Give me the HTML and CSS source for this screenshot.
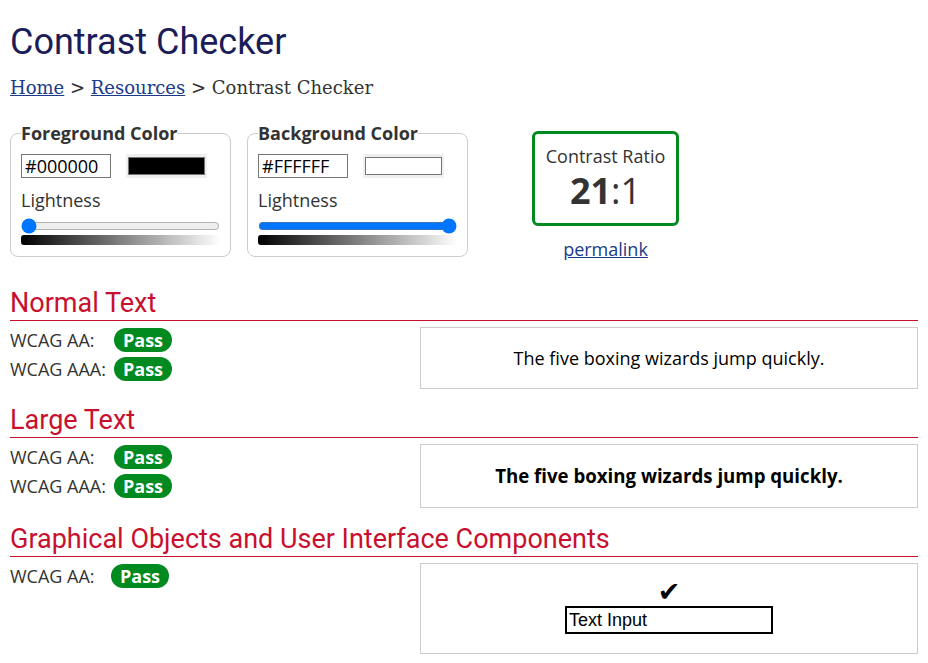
FILE: index.html
```html
<!DOCTYPE html>
<html lang="en">
<head>
<meta charset="utf-8">
<title>Contrast Checker</title>
<link rel="stylesheet" href="styles.css">
</head>
<body>
<h1 class="title">Contrast Checker</h1>
<nav class="crumbs"><a href="#">Home</a> &gt; <a href="#">Resources</a> &gt; Contrast Checker</nav>

<div class="controls">
  <fieldset class="picker">
    <legend>Foreground Color</legend>
    <div class="pick-row">
      <input class="hex" type="text" value="#000000">
      <span class="swatch-wrap"><span class="swatch swatch-black"></span></span>
    </div>
    <label class="light-label">Lightness</label>
    <input class="range" type="range" min="0" max="100" value="0">
    <div class="grad"></div>
  </fieldset>
  <fieldset class="picker">
    <legend>Background Color</legend>
    <div class="pick-row">
      <input class="hex" type="text" value="#FFFFFF">
      <span class="swatch-wrap"><span class="swatch swatch-white"></span></span>
    </div>
    <label class="light-label">Lightness</label>
    <input class="range" type="range" min="0" max="100" value="100">
    <div class="grad"></div>
  </fieldset>
  <div class="ratio-col">
    <div class="ratio-box">
      <div class="ratio-label">Contrast Ratio</div>
      <div class="ratio-value"><b>21</b>:1</div>
    </div>
    <a class="permalink" href="#">permalink</a>
  </div>
</div>

<section class="result">
  <h2 class="sec-title">Normal Text</h2>
  <div class="sec-body">
    <table class="levels">
      <tr><td class="lvl">WCAG AA:</td><td><span class="pass">Pass</span></td></tr>
      <tr><td class="lvl">WCAG AAA:</td><td><span class="pass">Pass</span></td></tr>
    </table>
    <div class="sample sample-normal">The five boxing wizards jump quickly.</div>
  </div>
</section>

<section class="result">
  <h2 class="sec-title">Large Text</h2>
  <div class="sec-body">
    <table class="levels">
      <tr><td class="lvl">WCAG AA:</td><td><span class="pass">Pass</span></td></tr>
      <tr><td class="lvl">WCAG AAA:</td><td><span class="pass">Pass</span></td></tr>
    </table>
    <div class="sample sample-large">The five boxing wizards jump quickly.</div>
  </div>
</section>

<section class="result">
  <h2 class="sec-title">Graphical Objects and User Interface Components</h2>
  <div class="sec-body">
    <table class="levels">
      <tr><td class="lvl lvl-short">WCAG AA:</td><td><span class="pass">Pass</span></td></tr>
    </table>
    <div class="sample sample-ui">
      <span class="check">&#10004;</span>
      <div class="fake-input">Text Input</div>
    </div>
  </div>
</section>
</body>
</html>
```

FILE: styles.css
```css
* { box-sizing: border-box; }
body {
  margin: 0;
  padding: 0 10px;
  font-family: "Open Sans", sans-serif;
  font-size: 18px;
  color: #333;
  background: #fff;
}
.title {
  font-family: Roboto, sans-serif;
  font-weight: 400;
  font-size: 36px;
  color: #1b1d5a;
  margin: 21px 0 14px;
  line-height: 42px;
}
.crumbs {
  font-family: "DejaVu Serif", serif;
  font-size: 18px;
  color: #333;
  line-height: 22px;
}
.crumbs a { color: #1a3a8a; }

.controls {
  display: flex;
  align-items: flex-start;
  margin-top: 23px;
}
.picker {
  margin: 0 16px 0 0;
  width: 221px;
  border: 1px solid #ccc;
  border-radius: 8px;
  padding: 0 10px 11px;
}
.picker legend {
  font-weight: 700;
  font-size: 18px;
  color: #333;
  padding: 0;
  line-height: 22px;
}
.pick-row {
  display: flex;
  align-items: center;
  gap: 15px;
  margin-top: 10px;
}
.hex {
  width: 90px;
  height: 24px;
  font-family: "Open Sans", sans-serif;
  font-size: 18px;
  color: #000;
  border: 1px solid #767676;
  padding: 0 3px;
  margin: 0;
}
.swatch-wrap {
  display: block;
  width: 81px;
  height: 24px;
  background: #efefef;
  padding: 3px 2px;
}
.swatch {
  display: block;
  height: 100%;
  border: 1px solid #767676;
}
.swatch-black { background: #000; }
.swatch-white { background: #fff; }
.light-label {
  display: block;
  margin-top: 10px;
  line-height: 24px;
}
.range {
  display: block;
  width: 199px;
  margin: 6px 0 0;
  height: 16px;
}
.grad {
  width: 199px;
  height: 10px;
  margin-top: 1px;
  border-radius: 3px 0 0 3px;
  background: linear-gradient(to right, #000, #fff);
}
.ratio-col {
  margin-left: 48px;
  margin-top: 9px;
  width: 147px;
  display: flex;
  flex-direction: column;
  align-items: center;
}
.ratio-box {
  width: 147px;
  height: 95px;
  border: 3px solid #008a20;
  border-radius: 6px;
  text-align: center;
  padding-top: 10px;
}
.ratio-label { line-height: 24px; }
.ratio-value {
  font-size: 36px;
  line-height: 46px;
  color: #333;
}
.ratio-value b { font-weight: 700; }
.permalink {
  margin-top: 11px;
  color: #1a3a8a;
  line-height: 24px;
}

.controls + .result { margin-top: 27px; }
.sec-title {
  font-family: Roboto, sans-serif;
  font-weight: 400;
  font-size: 27px;
  color: #c8102e;
  margin: 0;
  line-height: 30px;
  padding-bottom: 2px;
  border-bottom: 1px solid #c8102e;
}
.result + .result { margin-top: 16px; }
.sec-body {
  display: flex;
  align-items: flex-start;
  margin-top: 6px;
}
.levels {
  width: 410px;
  border-collapse: collapse;
  flex: none;
  margin-top: -2px;
}
.levels td {
  padding: 0;
  height: 29px;
  vertical-align: middle;
  white-space: nowrap;
}
.levels td.lvl { width: 104px; }
.levels td.lvl-short { width: 101px; }
.pass {
  display: inline-block;
  background: #008a20;
  color: #fff;
  font-weight: 700;
  border-radius: 12px;
  padding: 0 9px;
  line-height: 24px;
}
.sample {
  flex: 1;
  border: 1px solid #ccc;
  color: #000;
  text-align: center;
}
.sample-normal { height: 62px; line-height: 60px; }
.sample-large { height: 64px; line-height: 62px; font-size: 18.67px; font-weight: 700; }
.sample-ui {
  height: 91px;
  display: flex;
  flex-direction: column;
  align-items: center;
  padding-top: 14px;
}
.check {
  font-family: "DejaVu Sans", sans-serif;
  font-size: 27px;
  line-height: 28px;
  color: #000;
}
.fake-input {
  width: 208px;
  height: 28px;
  border: 2px solid #000;
  text-align: left;
  font-family: "Liberation Sans", Arial, sans-serif;
  font-size: 18px;
  line-height: 24px;
  padding-left: 2px;
}
```
